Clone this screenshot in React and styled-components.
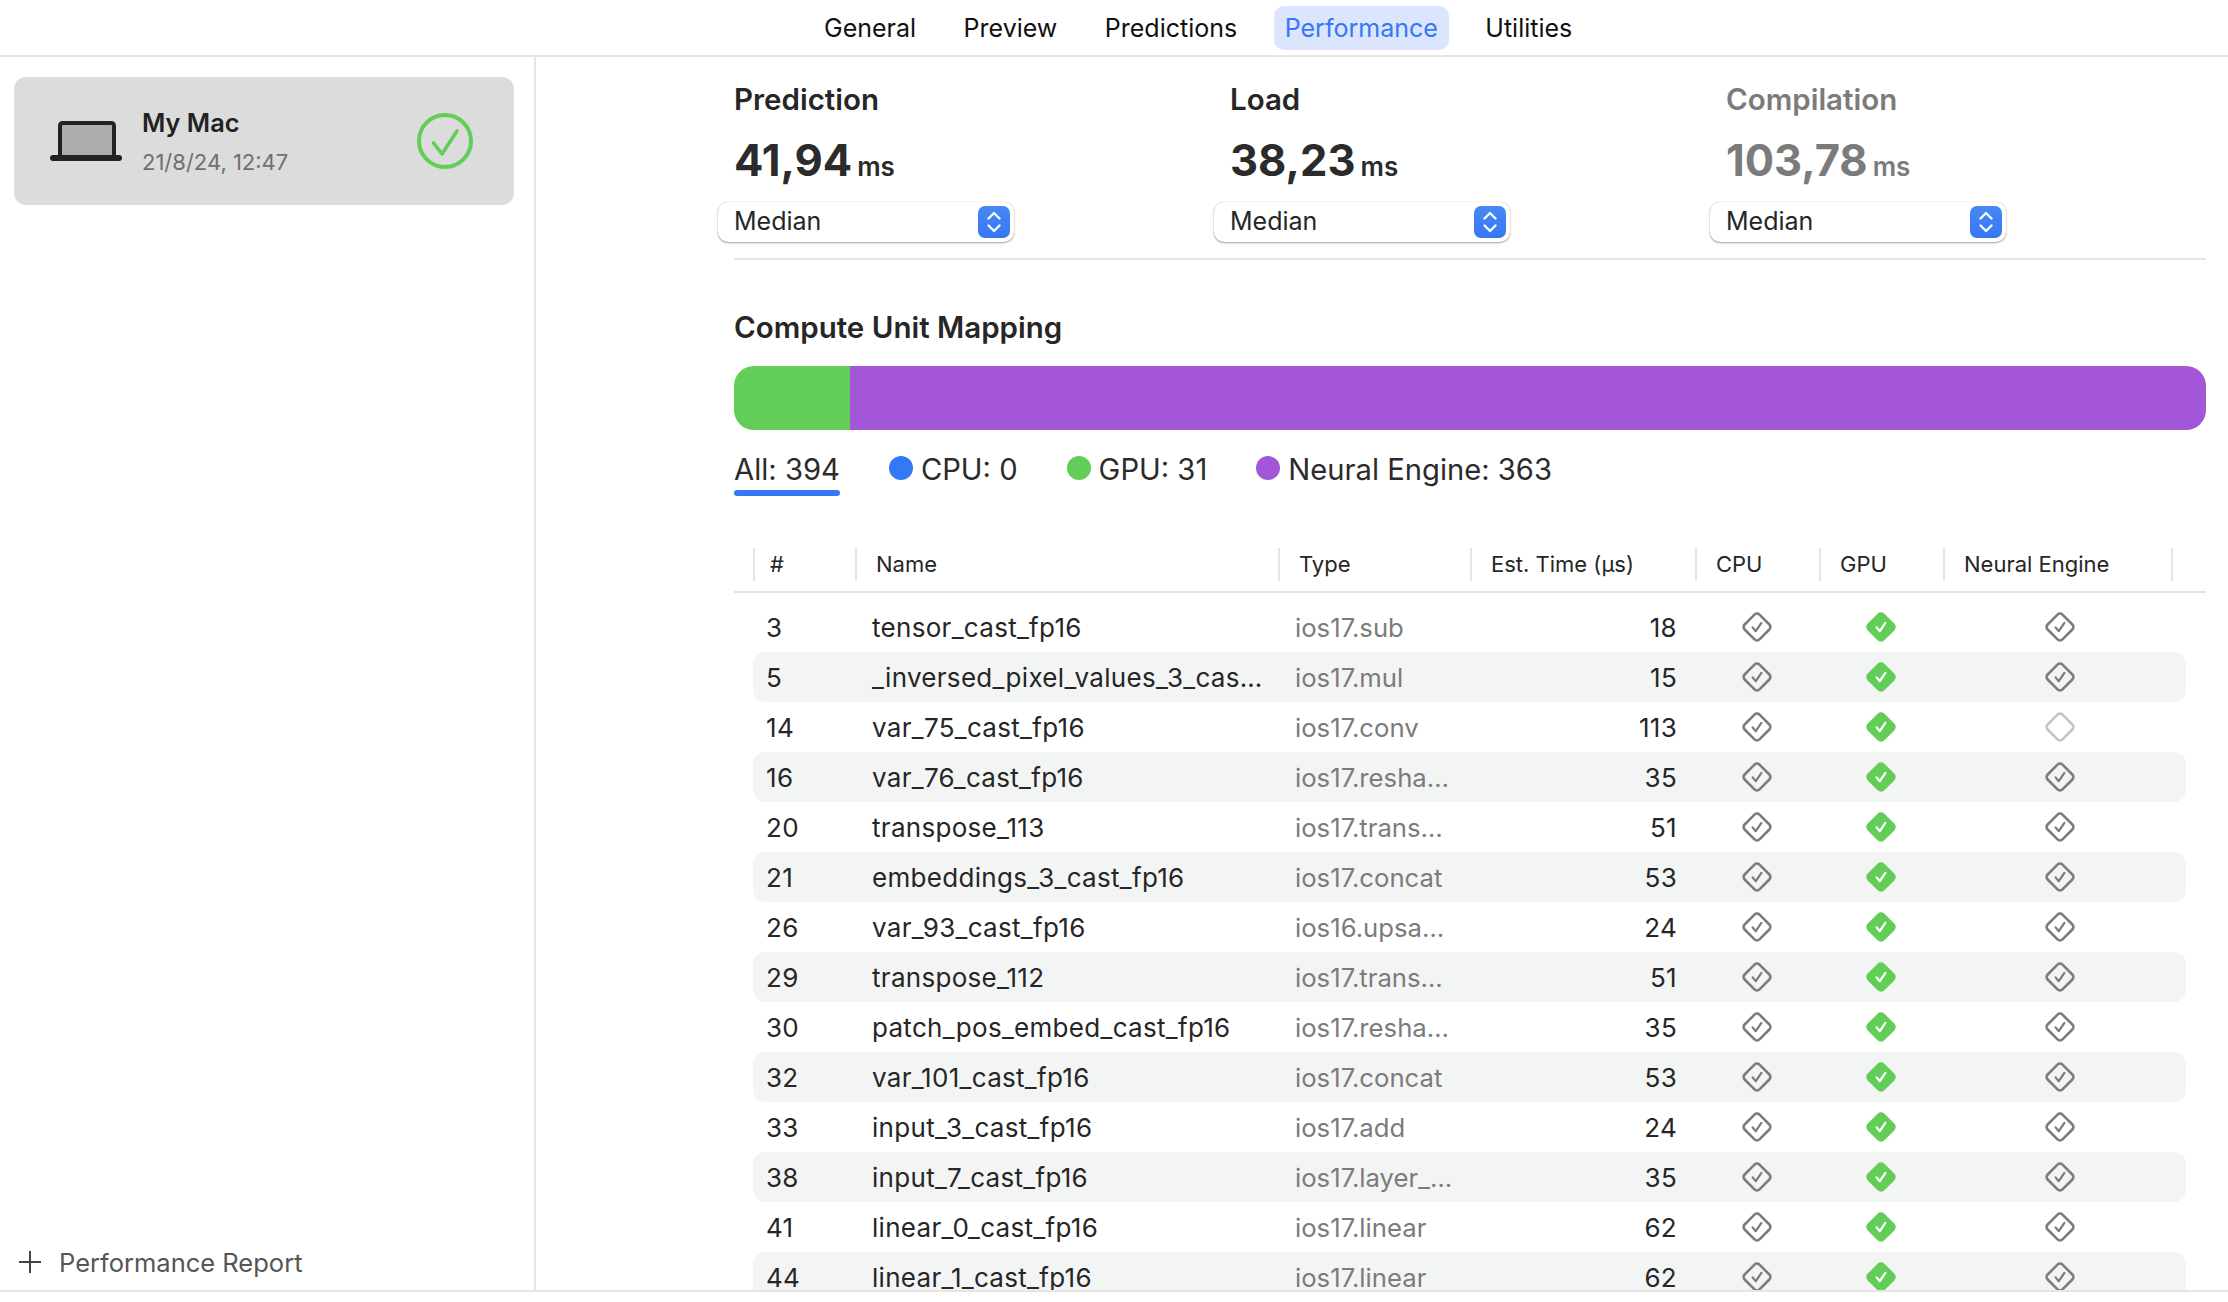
import React from "react"
import styled, { createGlobalStyle } from "styled-components"

const rows = [
  { id: 3, name: "tensor_cast_fp16", type: "ios17.sub", time: 18 },
  { id: 5, name: "_inversed_pixel_values_3_cas…", type: "ios17.mul", time: 15 },
  { id: 14, name: "var_75_cast_fp16", type: "ios17.conv", time: 113, noNeural: true },
  { id: 16, name: "var_76_cast_fp16", type: "ios17.resha…", time: 35 },
  { id: 20, name: "transpose_113", type: "ios17.trans…", time: 51 },
  { id: 21, name: "embeddings_3_cast_fp16", type: "ios17.concat", time: 53 },
  { id: 26, name: "var_93_cast_fp16", type: "ios16.upsa…", time: 24 },
  { id: 29, name: "transpose_112", type: "ios17.trans…", time: 51 },
  { id: 30, name: "patch_pos_embed_cast_fp16", type: "ios17.resha…", time: 35 },
  { id: 32, name: "var_101_cast_fp16", type: "ios17.concat", time: 53 },
  { id: 33, name: "input_3_cast_fp16", type: "ios17.add", time: 24 },
  { id: 38, name: "input_7_cast_fp16", type: "ios17.layer_…", time: 35 },
  { id: 41, name: "linear_0_cast_fp16", type: "ios17.linear", time: 62 },
  { id: 44, name: "linear_1_cast_fp16", type: "ios17.linear", time: 62 },
]

const stats = [
  { title: "Prediction", value: "41,94" },
  { title: "Load", value: "38,23" },
  { title: "Compilation", value: "103,78", dim: true },
]

const tabs = ["General", "Preview", "Predictions", "Performance", "Utilities"]
const columns = ["#", "Name", "Type", "Est. Time (µs)", "CPU", "GPU", "Neural Engine"]
const legend = [
  { label: "CPU: 0", color: "#3478f6" },
  { label: "GPU: 31", color: "#62cd57" },
  { label: "Neural Engine: 363", color: "#a356d6" },
]

const Diamond = ({ state }) => {
  const on = state === "on"
  const off = state === "off"
  return (
    <svg width="30" height="30" viewBox="0 0 30 30">
      <rect
        x="4.5"
        y="4.5"
        width="21"
        height="21"
        rx="3.5"
        transform="rotate(45 15 15)"
        fill={on ? "#62cd57" : "none"}
        stroke={on ? "#62cd57" : off ? "#c4c4c4" : "#7c7c7c"}
        strokeWidth="2.6"
      />
      {!off && (
        <path
          d="M10.6 15.4 L13.8 19.2 L19.4 10.8"
          fill="none"
          stroke={on ? "#fff" : "#7c7c7c"}
          strokeWidth="2.2"
          strokeLinecap="round"
          strokeLinejoin="round"
        />
      )}
    </svg>
  )
}

const Laptop = () => (
  <svg width="72" height="40" viewBox="0 0 72 40">
    <path
      d="M10 36 V5 Q10 2 13 2 H61 Q64 2 64 5 V36"
      fill="#adadad"
      stroke="#222"
      strokeWidth="4"
    />
    <rect x="0" y="34" width="72" height="6" rx="3" fill="#222" />
  </svg>
)

const CheckCircle = () => (
  <svg width="56" height="56" viewBox="0 0 56 56">
    <circle cx="28" cy="28" r="26" fill="none" stroke="#62cd57" strokeWidth="4" />
    <path
      d="M16.5 30 L25 41 L40 18"
      fill="none"
      stroke="#62cd57"
      strokeWidth="3.6"
      strokeLinecap="round"
      strokeLinejoin="round"
    />
  </svg>
)

const Stepper = () => (
  <StepperBox>
    <svg width="16" height="24" viewBox="0 0 16 24">
      <path
        d="M2.5 8.5 L8 3 L13.5 8.5 M2.5 15.5 L8 21 L13.5 15.5"
        fill="none"
        stroke="#fff"
        strokeWidth="2.4"
        strokeLinecap="round"
        strokeLinejoin="round"
      />
    </svg>
  </StepperBox>
)

const App = () => (
  <Page>
    <GlobalStyle />
    <TopBar>
      {tabs.map((tab) => (
        <Tab key={tab} $active={tab === "Performance"}>
          {tab}
        </Tab>
      ))}
    </TopBar>
    <Body>
      <Sidebar>
        <DeviceCard>
          <Laptop />
          <DeviceText>
            <DeviceName>My Mac</DeviceName>
            <DeviceDate>21/8/24, 12:47</DeviceDate>
          </DeviceText>
          <CheckSlot>
            <CheckCircle />
          </CheckSlot>
        </DeviceCard>
        <AddReport>
          <svg width="22" height="22" viewBox="0 0 22 22">
            <path d="M11 0 V22 M0 11 H22" stroke="#444" strokeWidth="2" />
          </svg>
          <span>Performance Report</span>
        </AddReport>
      </Sidebar>
      <Main>
        <Stats>
          {stats.map((s) => (
            <Stat key={s.title}>
              <StatTitle $dim={s.dim}>{s.title}</StatTitle>
              <StatValue $dim={s.dim}>
                {s.value}
                <Unit>ms</Unit>
              </StatValue>
              <Select>
                <SelectLabel>Median</SelectLabel>
                <Stepper />
              </Select>
            </Stat>
          ))}
        </Stats>
        <Divider />
        <Heading>Compute Unit Mapping</Heading>
        <Bar>
          <BarPart $color="#62cd57" style={{ width: 116 }} />
          <BarPart $color="#a356d6" style={{ flex: 1 }} />
        </Bar>
        <Legend>
          <AllItem>
            <span>All: 394</span>
            <Underline />
          </AllItem>
          {legend.map((item) => (
            <LegendItem key={item.label}>
              <Dot $color={item.color} />
              {item.label}
            </LegendItem>
          ))}
        </Legend>
        <TableHead>
          <HeadRow>
            {columns.map((c) => (
              <HeadCell key={c} $narrow={c === "#"}>
                {c}
              </HeadCell>
            ))}
            <HeadCell />
          </HeadRow>
        </TableHead>
        <TableBody>
          {rows.map((r, i) => (
            <Row key={r.id} $shaded={i % 2 === 1}>
              <IdCell>{r.id}</IdCell>
              <NameCell>{r.name}</NameCell>
              <TypeCell>{r.type}</TypeCell>
              <TimeCell>{r.time}</TimeCell>
              <IconCell>
                <Diamond state="supported" />
              </IconCell>
              <IconCell>
                <Diamond state="on" />
              </IconCell>
              <NeuralCell>
                <Diamond state={r.noNeural ? "off" : "supported"} />
              </NeuralCell>
            </Row>
          ))}
        </TableBody>
      </Main>
    </Body>
  </Page>
)

export default App

const GlobalStyle = createGlobalStyle`
  html, body {
    margin: 0;
    padding: 0;
    background: #fff;
  }
  body {
    font-family: "Inter", "Liberation Sans", sans-serif;
    color: #262626;
  }
`

const GRID = "102px 423px 192px 225px 124px 124px 228px 15px"

const Page = styled.div`
  width: 2228px;
  height: 1302px;
  display: flex;
  flex-direction: column;
  overflow: hidden;
  background: #fff;
`

const TopBar = styled.nav`
  height: 55px;
  flex: none;
  box-sizing: content-box;
  border-bottom: 2px solid #e5e5e5;
  display: flex;
  align-items: center;
  gap: 25.5px;
  padding-left: 813px;
`

const Tab = styled.div`
  height: 44px;
  padding: 0 11px;
  border-radius: 10px;
  display: flex;
  align-items: center;
  font-size: 25px;
  color: ${(p) => (p.$active ? "#3478f6" : "#111")};
  background: ${(p) => (p.$active ? "#dbe5fd" : "transparent")};
`

const Body = styled.div`
  height: 1233px;
  flex: none;
  display: flex;
  border-bottom: 2px solid #e5e5e5;
  overflow: hidden;
`

const Sidebar = styled.aside`
  flex: none;
  box-sizing: border-box;
  border-right: 2px solid #e5e5e5;
  width: 536px;
  padding: 20px 20px 11px 14px;
  display: flex;
  flex-direction: column;
`

const DeviceCard = styled.div`
  height: 128px;
  border-radius: 12px;
  background: #dcdcdc;
  display: flex;
  align-items: center;
  gap: 20px;
  padding: 0 41px 0 36px;
`

const DeviceText = styled.div`
  display: flex;
  flex-direction: column;
  gap: 7px;
  padding-top: 2px;
`

const DeviceName = styled.div`
  font-size: 25.3px;
  line-height: 32px;
  font-weight: 600;
  color: #222;
`

const DeviceDate = styled.div`
  font-size: 22px;
  line-height: 32px;
  color: #6f6f6f;
`

const CheckSlot = styled.div`
  margin-left: auto;
  display: flex;
`

const AddReport = styled.div`
  margin-top: auto;
  height: 34px;
  display: flex;
  align-items: center;
  gap: 18px;
  padding-left: 5px;
  font-size: 25.5px;
  color: #555;
`

const Main = styled.main`
  flex: 1;
  min-width: 0;
  padding: 22px 22px 0 198px;
`

const Stats = styled.div`
  display: flex;
`

const Stat = styled.div`
  width: 496px;
  flex: none;
`

const StatTitle = styled.div`
  font-size: 29.5px;
  line-height: 40px;
  font-weight: 600;
  color: ${(p) => (p.$dim ? "#7b7b7b" : "#262626")};
`

const StatValue = styled.div`
  margin-top: 18px;
  height: 47px;
  font-size: 43.5px;
  line-height: 47px;
  font-weight: 700;
  color: ${(p) => (p.$dim ? "#7b7b7b" : "#2b2b2b")};
`

const Unit = styled.span`
  margin-left: 5px;
  font-size: 26px;
  font-weight: 600;
`

const Select = styled.div`
  margin: 18px 0 0 -16px;
  width: 296px;
  height: 40px;
  box-sizing: border-box;
  padding: 0 4px 0 16px;
  border-radius: 10px;
  background: #fff;
  box-shadow: 0 1px 2px rgba(0, 0, 0, 0.35), 0 0 1px rgba(0, 0, 0, 0.3);
  display: flex;
  align-items: center;
  justify-content: space-between;
  font-size: 25px;
  color: #262626;
`

const SelectLabel = styled.span`
  line-height: 38px;
  margin-bottom: 2px;
`

const StepperBox = styled.div`
  width: 32px;
  height: 32px;
  border-radius: 7px;
  background: linear-gradient(#4a88f7, #3478f6);
  display: flex;
  align-items: center;
  justify-content: center;
`

const Divider = styled.div`
  margin-top: 16px;
  height: 2px;
  background: #e5e5e5;
`

const Heading = styled.h2`
  margin: 47px 0 0;
  font-size: 29.5px;
  line-height: 40px;
  font-weight: 600;
  color: #262626;
`

const Bar = styled.div`
  margin-top: 19px;
  height: 64px;
  border-radius: 20px;
  overflow: hidden;
  display: flex;
`

const BarPart = styled.div`
  background: ${(p) => p.$color};
`

const Legend = styled.div`
  margin-top: 16px;
  height: 50px;
  display: flex;
  font-size: 29.2px;
  line-height: 47px;
  color: #2b2b2b;
`

const AllItem = styled.div`
  display: flex;
  flex-direction: column;
  margin-right: 49px;
`

const Underline = styled.div`
  height: 6px;
  margin-top: -3px;
  border-radius: 3px;
  background: #3478f6;
`

const LegendItem = styled.div`
  display: flex;
  align-items: flex-start;
  gap: 8px;
  margin-right: 49px;
`

const Dot = styled.span`
  width: 24px;
  height: 24px;
  margin-top: 10px;
  border-radius: 50%;
  background: ${(p) => p.$color};
`

const TableHead = styled.div`
  margin-top: 52px;
  padding: 0 0 11px 19px;
  border-bottom: 2px solid #e5e5e5;
`

const HeadRow = styled.div`
  display: grid;
  grid-template-columns: ${GRID};
  height: 32px;
`

const HeadCell = styled.div`
  border-left: 2px solid #e5e5e5;
  padding-left: ${(p) => (p.$narrow ? "15px" : "19px")};
  font-size: 22px;
  line-height: 33px;
  white-space: nowrap;
  color: #262626;
  &:last-child {
    padding: 0;
  }
`

const TableBody = styled.div`
  padding: 9px 20px 0 19px;
`

const Row = styled.div`
  display: grid;
  grid-template-columns: ${GRID};
  height: 50px;
  align-items: center;
  border-radius: 12px;
  background: ${(p) => (p.$shaded ? "#f3f5f5" : "transparent")};
  font-size: 26px;
  letter-spacing: 0.3px;
  white-space: nowrap;
  color: #262626;
`

const TextCell = styled.div`
  line-height: 32px;
  padding-top: 1px;
`

const IdCell = styled(TextCell)`
  padding-left: 13px;
`

const NameCell = styled(TextCell)`
  padding-left: 17px;
`

const TypeCell = styled(TextCell)`
  padding-left: 17px;
  letter-spacing: 0;
  font-size: 25.7px;
  color: #7b7b7b;
`

const TimeCell = styled(TextCell)`
  padding-right: 18px;
  text-align: right;
`

const IconCell = styled.div`
  display: flex;
  justify-content: center;
`

const NeuralCell = styled(IconCell)`
  padding-left: 5px;
`
